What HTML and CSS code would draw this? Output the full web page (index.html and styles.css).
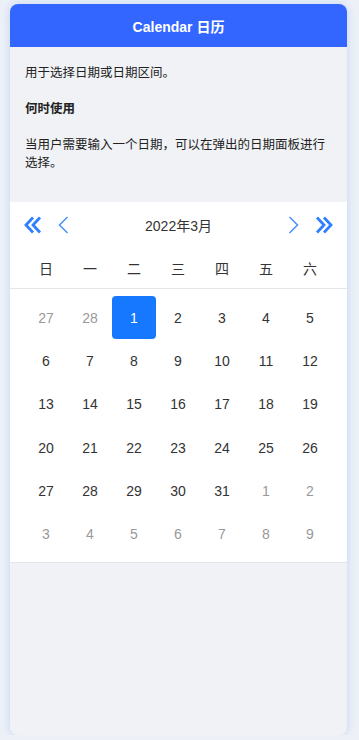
FILE: index.html
```html
<!DOCTYPE html>
<html lang="zh-CN">
<head>
  <meta charset="UTF-8">
  <title>Calendar 日历</title>
  <meta name="viewport" content="width=device-width, initial-scale=1.0">
  <link rel="stylesheet" href="styles.css">
</head>
<body>
  <div class="card">
    <header class="card-header">Calendar 日历</header>
    <section class="intro">
      <p>用于选择日期或日期区间。</p>
      <p class="strong">何时使用</p>
      <p>当用户需要输入一个日期，可以在弹出的日期面板进行选择。</p>
    </section>
    <section class="calendar">
      <div class="cal-nav">
        <div class="nav-group">
          <svg class="icon-double" width="18" height="18" viewBox="0 0 18 18"><path d="M9 1.5 L2 9 L9 16.5 M16 1.5 L9 9 L16 16.5" fill="none" stroke="#2f80ff" stroke-width="2.8"/></svg>
          <svg class="icon-single" width="11" height="18" viewBox="0 0 11 18"><path d="M9.5 1 L1.5 9 L9.5 17" fill="none" stroke="#4a90ff" stroke-width="1.5"/></svg>
        </div>
        <div class="cal-title">2022年3月</div>
        <div class="nav-group">
          <svg class="icon-single" width="11" height="18" viewBox="0 0 11 18"><path d="M1.5 1 L9.5 9 L1.5 17" fill="none" stroke="#4a90ff" stroke-width="1.5"/></svg>
          <svg class="icon-double" width="18" height="18" viewBox="0 0 18 18"><path d="M2 1.5 L9 9 L2 16.5 M9 1.5 L16 9 L9 16.5" fill="none" stroke="#2f80ff" stroke-width="2.8"/></svg>
        </div>
      </div>
      <div class="weekdays">
        <span>日</span><span>一</span><span>二</span><span>三</span><span>四</span><span>五</span><span>六</span>
      </div>
      <div class="days" id="days"></div>
    </section>
  </div>
  <script>
    const daysEl = document.getElementById('days');
    const cells = [];
    cells.push({ d: 27, other: true }, { d: 28, other: true });
    for (let i = 1; i <= 31; i++) cells.push({ d: i });
    for (let i = 1; i <= 9; i++) cells.push({ d: i, other: true });
    let html = '';
    for (const c of cells) {
      let cls = 'day';
      if (c.other) cls += ' other';
      if (!c.other && c.d === 1) cls += ' selected';
      html += '<div class="' + cls + '"><span>' + c.d + '</span></div>';
    }
    daysEl.innerHTML = html;
  </script>
</body>
</html>
```

FILE: styles.css
```css
body { margin: 0; background: #edf1f7; font-family: "Liberation Sans", "Noto Sans CJK SC", sans-serif; color: #222; }
.card { margin: 4px 12px 0 10px; height: 731px; background: #f0f2f5; border-radius: 8px; overflow: hidden; box-shadow: 0 0 10px rgba(120, 160, 230, 0.35); display: flex; flex-direction: column; }
.card-header { height: 43px; background: #3366ff; color: #fff; font-weight: bold; font-size: 14px; display: flex; align-items: center; justify-content: center; }
.intro { padding: 17px 15px 12px; font-size: 12.5px; line-height: 18px; }
.intro p { margin: 0 0 18px; }
.intro .strong { font-weight: bold; }
.calendar { background: #fff; border-bottom: 1px solid #e2e4e8; }
.cal-nav { height: 46px; display: flex; align-items: center; justify-content: space-between; padding: 0 14px; }
.nav-group { display: flex; align-items: center; gap: 16px; }
.icon-double, .icon-single { display: block; }
.cal-title { font-size: 14px; color: #333; }
.weekdays { display: grid; grid-template-columns: repeat(7, 44px); padding: 0 14px; height: 40px; align-items: center; border-bottom: 1px solid #e5e6ea; font-size: 14px; color: #333; }
.weekdays span { text-align: center; }
.days { display: grid; grid-template-columns: repeat(7, 44px); grid-auto-rows: 43.3px; padding: 7px 14px 6px; }
.day { display: flex; align-items: center; justify-content: center; font-size: 14px; color: #333; border-radius: 4px; }
.day.other { color: #999; }
.day.selected { background: #1677ff; color: #fff; }
```
